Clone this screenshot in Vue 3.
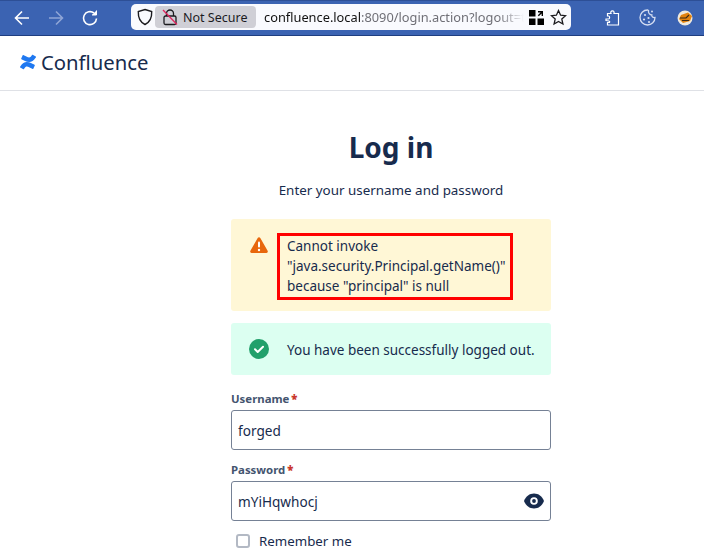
<script setup>
const fields = [
  { label: 'Username', value: 'forged', eye: false },
  { label: 'Password', value: 'mYiHqwhocj', eye: true },
]
</script>

<template>
  <div class="page">
    <div class="toolbar">
      <div class="nav">
        <svg width="18" height="18" viewBox="0 0 18 18" fill="none" stroke="#fff" stroke-width="1.6"><path d="M16 9H2.500M9 2.500 2.500 9 9 15.500"/></svg>
        <svg class="fwd" width="18" height="18" viewBox="0 0 18 18" fill="none" stroke="#8fa5d6" stroke-width="1.6"><path d="M2 9h13.500M9 2.500 15.500 9 9 15.500"/></svg>
        <svg class="rel" width="18" height="18" viewBox="0 0 18 18" fill="none" stroke="#fff" stroke-width="1.6"><path d="M15.500 9.500A6.500 6.500 0 1 1 13 4"/><path d="M15.500 1.500v4.500H11" fill="#fff" stroke-width="1"/></svg>
      </div>
      <div class="urlbar">
        <svg class="shield" width="16" height="18" viewBox="0 0 16 18" fill="none" stroke="#1b1b1f" stroke-width="1.400"><path d="M8 1.500 14.700 3.500c.3 6.500-1.500 10.500-6.700 13C2.800 14 1 10 1.300 3.500z"/></svg>
        <div class="secure">
          <svg width="16" height="18" viewBox="0 0 16 18" fill="none"><path d="M4.500 8V5.500a3.500 3.500 0 0 1 7 0V8" stroke="#1b1b1f" stroke-width="1.300"/><rect x="2" y="8" width="12" height="8.500" rx="1.500" stroke="#1b1b1f" stroke-width="1.300"/><path d="M1 2 15 16.500" stroke="#e0245e" stroke-width="1.300"/></svg>
          <span>Not Secure</span>
        </div>
        <div class="url"><span class="host">confluence.local</span><span class="rest">:8090/login.action?logout=tr</span></div>
        <svg class="tabs" width="15" height="15" viewBox="0 0 15 15" fill="#000"><rect x="0" y="0" width="6.500" height="6.500"/><rect x="0" y="8.500" width="6.500" height="6.500"/><rect x="8.500" y="8.500" width="6.500" height="6.500"/><path d="M9 1h5v5h-1.400V3.400L9.800 6.200 8.800 5.200 11.600 2.400H9z"/></svg>
        <svg class="star" width="17" height="17" viewBox="0 0 17 17" fill="none" stroke="#1b1b1f" stroke-width="1.300"><path d="M8.500 1.500 10.600 6.200l5 .5-3.800 3.300 1.100 5L8.500 12.400 4.100 15l1.100-5L1.400 6.700l5-.5z"/></svg>
      </div>
      <div class="ext">
        <svg width="15" height="17" viewBox="0 0 15 17" fill="none" stroke="#fff" stroke-width="1.200"><path d="M1 10h2.500c1.500 0 1.500-3 0-3H2.500V4.500h3.500c-1.500-3 4-4 3 0h4.500V16H2.500v-2.500H4.500c.8-1.500-1-2-3.500-2z"/></svg>
        <svg class="cookie" width="17" height="17" viewBox="0 0 17 17" fill="none" stroke="#d4ddf2" stroke-width="1.300"><path d="M8.500 1A7.500 7.500 0 1 0 16 8.500c-2 .5-3.500-1-3.200-2.500C10.800 6 9 4 9.500 1.500z" /><circle cx="6" cy="6" r="1.100" fill="#d4ddf2" stroke="none"/><circle cx="5" cy="10.500" r="1.100" fill="#d4ddf2" stroke="none"/><circle cx="9.500" cy="9" r="1.100" fill="#d4ddf2" stroke="none"/><circle cx="10" cy="13" r="1.100" fill="#d4ddf2" stroke="none"/><circle cx="13" cy="2.500" r="1" fill="#d4ddf2" stroke="none"/></svg>
        <svg class="avatar" width="16" height="16" viewBox="0 0 16 16"><circle cx="8" cy="8" r="7.500" fill="#efe9dd"/><path d="M4 5 11 2.500 15 6 13 11 6 13 2 9z" fill="#e2820f"/><path d="M3 8h6l3-3M5 10.500h7" stroke="#3b2a16" stroke-width="1.200" fill="none"/></svg>
      </div>
    </div>

    <header class="brand">
      <svg width="16" height="16" viewBox="0 0 16 16" fill="#1f78f0"><path d="M.6 11.900c-.2.300-.4.700-.6.900-.1.200 0 .5.200.6l3.100 1.900c.2.100.5.100.6-.2.100-.2.300-.5.600-.9 1.300-2.200 2.700-1.900 5.100-.7l3.100 1.500c.2.100.5 0 .6-.2l1.500-3.400c.1-.2 0-.5-.2-.6-.7-.3-2-1-3.100-1.500C7.400 7.200 3.400 7.300.6 11.900z"/><path d="M15.400 4.100c.2-.3.400-.7.600-.9.1-.2 0-.5-.2-.6L12.700.7c-.2-.1-.5-.1-.6.2-.1.200-.3.500-.6.900-1.300 2.200-2.700 1.900-5.100.7L3.300 1c-.2-.1-.5 0-.6.200L1.200 4.600c-.1.200 0 .5.200.6.700.3 2 1 3.100 1.500 4.100 2.100 8.100 2 10.900-2.600z"/></svg>
      <span>Confluence</span>
    </header>

    <main class="main">
      <h1>Log in</h1>
      <p class="sub">Enter your username and password</p>

      <div class="alert warn">
        <svg class="ic" width="18" height="16" viewBox="0 0 18 16"><path d="M7.700.9a1.500 1.500 0 0 1 2.600 0l7.300 12.800a1.500 1.500 0 0 1-1.300 2.300H1.700a1.500 1.500 0 0 1-1.300-2.300z" fill="#e8670c"/><rect x="8" y="4.500" width="2" height="6" rx="1" fill="#fff"/><circle cx="9" cy="13" r="1.200" fill="#fff"/></svg>
        <div class="msg">
          Cannot invoke<br>"java.security.Principal.getName()"<br>because "principal" is null
          <span class="mark"></span>
        </div>
      </div>

      <div class="alert ok">
        <svg class="ic" width="20" height="20" viewBox="0 0 20 20"><circle cx="10" cy="10" r="10" fill="#22a06b"/><path d="M6 10.300 8.700 13 14 7.800" fill="none" stroke="#fff" stroke-width="2" stroke-linecap="round" stroke-linejoin="round"/></svg>
        <div class="msg">You have been successfully logged out.</div>
      </div>

      <form class="form" @submit.prevent>
        <div v-for="f in fields" :key="f.label" class="field">
          <label>{{ f.label }}<b>*</b></label>
          <div class="input">
            <span>{{ f.value }}</span>
            <svg v-if="f.eye" width="20" height="16" viewBox="0 0 20 16"><path d="M0 8C2 3.200 5.500.5 10 .5S18 3.200 20 8c-2 4.800-5.500 7.500-10 7.500S2 12.800 0 8z" fill="#172b4d"/><circle cx="10" cy="8" r="3.800" fill="#fff"/><circle cx="10" cy="8" r="1.900" fill="#172b4d"/></svg>
          </div>
        </div>
        <div class="remember"><i></i><span>Remember me</span></div>
      </form>
    </main>
  </div>
</template>

<style scoped>
.page { width: 704px; height: 559px; overflow: hidden; background: #fff; font-family: "Noto Sans", "Open Sans", sans-serif; color: #172b4d; }
.toolbar { height: 36px; box-sizing: border-box; display: flex; align-items: center; background: #3b63b2; border-top: 1px solid #2d4f96; border-bottom: 1px solid #1f3e80; }
.nav { display: flex; align-items: center; width: 131px; padding-left: 13px; box-sizing: border-box; }
.nav svg { flex: none; }
.fwd { margin-left: 16px; }
.rel { margin-left: 16px; }
.urlbar { width: 440px; height: 26px; margin-top: -2px; background: #f9fafe; border-radius: 5px; display: flex; align-items: center; box-sizing: border-box; padding-left: 6px; overflow: hidden; flex: none; }
.shield { flex: none; }
.secure { flex: none; margin-left: 2px; width: 101px; height: 22px; border-radius: 4px; background: #cfcfd6; display: flex; align-items: center; box-sizing: border-box; padding-left: 7px; gap: 5px; font-size: 12.500px; color: #1b1b1f; }
.url { flex: none; width: 260px; margin-left: 8px; font-size: 12.800px; white-space: nowrap; overflow: hidden; mask-image: linear-gradient(to right, #000 90%, transparent); }
.host { color: #111; }
.rest { color: #6f6f76; }
.tabs { flex: none; margin-left: 5px; }
.star { flex: none; margin-left: 6px; }
.ext { flex: 1; display: flex; align-items: center; padding-left: 34px; margin-top: -1px; }
.cookie { margin-left: 19px; }
.avatar { margin-left: 21px; }

.brand { height: 55px; box-sizing: border-box; border-bottom: 1px solid #dfe1e6; display: flex; align-items: center; padding: 0 0 2px 20px; gap: 5px; font-size: 20.300px; }
.main { width: 320px; margin-left: 231px; display: flex; flex-direction: column; }
h1 { margin: 36px 0 0; font-size: 28px; line-height: 40px; font-weight: 700; text-align: center; }
.sub { margin: 13px 0 0; height: 20px; font-size: 13.400px; line-height: 20px; text-align: center; }
.alert { display: flex; border-radius: 3px; font-size: 13.500px; line-height: 20px; box-sizing: border-box; }
.warn { margin-top: 19px; height: 92px; background: #fff7d6; padding: 17px 0 0 19px; }
.ok { margin-top: 12px; height: 52px; background: #dcfff1; padding: 0 0 0 18px; align-items: center; }
.ic { flex: none; }
.warn .ic { margin-top: 1px; }
.warn .msg { position: relative; margin-left: 19px; }
.ok .msg { margin-left: 18px; padding-top: 2px; }
.mark { position: absolute; left: -10px; top: -3px; width: 236px; height: 67px; box-sizing: border-box; border: 3px solid #f00; pointer-events: none; }
.form { margin-top: 16px; display: flex; flex-direction: column; }
.field { display: flex; flex-direction: column; margin-bottom: 12px; }
label { font-size: 11.400px; line-height: 16px; font-weight: 700; color: #44546f; margin-bottom: 3px; }
label b { color: #c9372c; margin-left: 2px; }
.input { height: 40px; box-sizing: border-box; border: 1px solid #758195; border-radius: 3px; display: flex; align-items: center; justify-content: space-between; padding: 0 6px; font-size: 13.600px; background: #fff; }
.remember { display: flex; align-items: center; margin-top: -2px; padding-left: 5px; font-size: 13.300px; line-height: 20px; }
.remember i { width: 14px; height: 14px; box-sizing: border-box; border: 2px solid #b3b9c4; border-radius: 3px; margin-right: 9px; }
</style>
